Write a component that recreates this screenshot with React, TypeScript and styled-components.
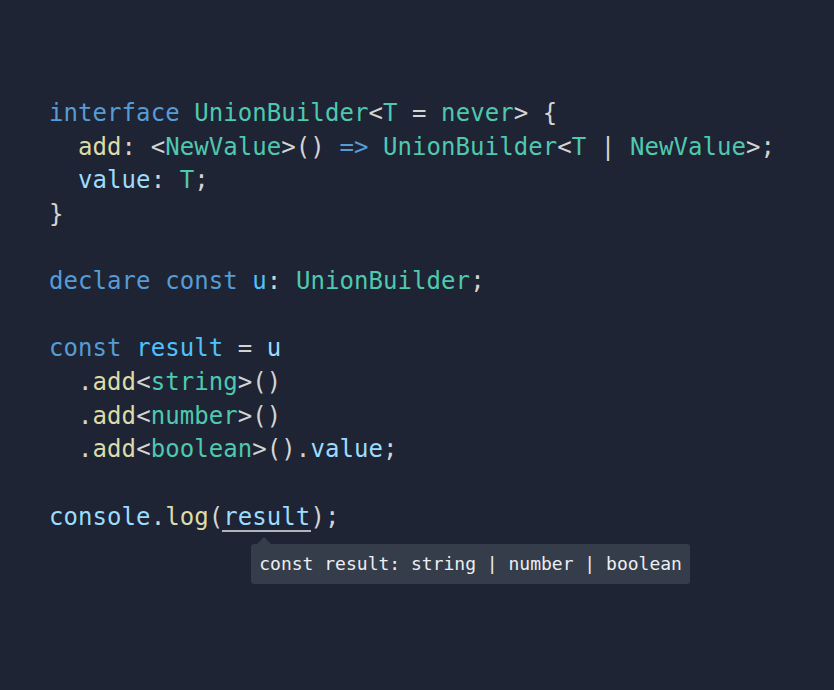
import React from "react";
import styled, { createGlobalStyle } from "styled-components";

const Global = createGlobalStyle`
  html, body { margin: 0; padding: 0; background: #1e2433; }
  body { width: 834px; height: 690px; overflow: hidden; }
`;

const Page = styled.div`
  width: 834px;
  height: 690px;
  box-sizing: border-box;
  background: #1e2433;
  padding: 97px 0 0 49px;
`;

const Code = styled.pre`
  margin: 0;
  font-family: "DejaVu Sans Mono", "Liberation Mono", monospace;
  font-size: 24px;
  line-height: 33.65px;
  letter-spacing: 0.07px;
  color: #d4d4d4;
  white-space: pre;
`;

type Kind = "kw" | "type" | "fn" | "prop" | "var" | "punc" | "op";

const colors: Record<Kind, string> = {
  kw: "#569cd6",
  type: "#4ec9b0",
  fn: "#dcdcaa",
  prop: "#9cdcfe",
  var: "#4fc1ff",
  punc: "#d4d4d4",
  op: "#569cd6",
};

const T = styled.span<{ $k: Kind }>`
  color: ${(p) => colors[p.$k]};
`;

const Line = styled.div`
  height: 33.65px;
`;

const Hovered = styled.span`
  position: relative;
  color: #9cdcfe;
  &::after {
    content: "";
    position: absolute;
    left: -1px;
    right: -1px;
    bottom: -1px;
    height: 2px;
    background: #b0b4bc;
  }
`;

const Tooltip = styled.div`
  position: absolute;
  left: 28px;
  top: 41px;
  background: #353d4b;
  border-radius: 3px;
  padding: 0 8px;
  height: 40px;
  display: flex;
  align-items: center;
  font-family: "DejaVu Sans Mono", "Liberation Mono", monospace;
  font-size: 18px;
  letter-spacing: 0;
  line-height: 40px;
  color: #eceef1;
  white-space: pre;
  &::before {
    content: "";
    position: absolute;
    left: 6px;
    top: -7px;
    border-left: 7px solid transparent;
    border-right: 7px solid transparent;
    border-bottom: 7px solid #353d4b;
  }
`;

export default function App() {
  return (
    <>
      <Global />
      <Page>
        <Code>
          <Line>
            <T $k="kw">interface</T> <T $k="type">UnionBuilder</T>
            <T $k="punc">{"<"}</T>
            <T $k="type">T</T> <T $k="punc">=</T> <T $k="type">never</T>
            <T $k="punc">{"> {"}</T>
          </Line>
          <Line>
            {"  "}
            <T $k="fn">add</T>
            <T $k="punc">{": <"}</T>
            <T $k="type">NewValue</T>
            <T $k="punc">{">() "}</T>
            <T $k="op">{"=>"}</T> <T $k="type">UnionBuilder</T>
            <T $k="punc">{"<"}</T>
            <T $k="type">T</T> <T $k="punc">|</T> <T $k="type">NewValue</T>
            <T $k="punc">{">;"}</T>
          </Line>
          <Line>
            {"  "}
            <T $k="prop">value</T>
            <T $k="punc">: </T>
            <T $k="type">T</T>
            <T $k="punc">;</T>
          </Line>
          <Line>
            <T $k="punc">{"}"}</T>
          </Line>
          <Line />
          <Line>
            <T $k="kw">declare</T> <T $k="kw">const</T> <T $k="var">u</T>
            <T $k="punc">: </T>
            <T $k="type">UnionBuilder</T>
            <T $k="punc">;</T>
          </Line>
          <Line />
          <Line>
            <T $k="kw">const</T> <T $k="var">result</T> <T $k="punc">=</T>{" "}
            <T $k="prop">u</T>
          </Line>
          <Line>
            {"  "}
            <T $k="punc">.</T>
            <T $k="fn">add</T>
            <T $k="punc">{"<"}</T>
            <T $k="type">string</T>
            <T $k="punc">{">()"}</T>
          </Line>
          <Line>
            {"  "}
            <T $k="punc">.</T>
            <T $k="fn">add</T>
            <T $k="punc">{"<"}</T>
            <T $k="type">number</T>
            <T $k="punc">{">()"}</T>
          </Line>
          <Line>
            {"  "}
            <T $k="punc">.</T>
            <T $k="fn">add</T>
            <T $k="punc">{"<"}</T>
            <T $k="type">boolean</T>
            <T $k="punc">{">()."}</T>
            <T $k="prop">value</T>
            <T $k="punc">;</T>
          </Line>
          <Line />
          <Line>
            <T $k="prop">console</T>
            <T $k="punc">.</T>
            <T $k="fn">log</T>
            <T $k="punc">(</T>
            <Hovered>
              result
              <Tooltip>const result: string | number | boolean</Tooltip>
            </Hovered>
            <T $k="punc">);</T>
          </Line>
        </Code>
      </Page>
    </>
  );
}
